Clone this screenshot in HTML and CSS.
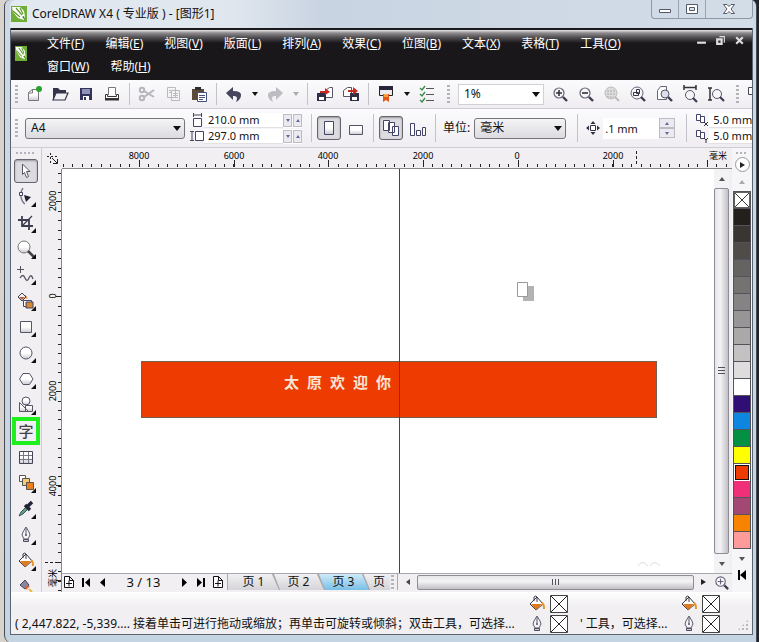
FILE: index.html
```html
<!DOCTYPE html>
<html lang="zh-CN">
<head>
<meta charset="utf-8">
<meta name="viewport" content="width=device-width, initial-scale=1">
<title>CorelDRAW X4 ( 专业版 ) - [图形1]</title>
<link rel="stylesheet" href="styles.css">
</head>
<body>
<svg class="defs" aria-hidden="true">
  <defs>
    <linearGradient id="shade" x1="0" y1="0" x2="0" y2="1"><stop offset=".5" stop-color="#fff"/><stop offset="1" stop-color="#c9c9d2"/></linearGradient>
  </defs>
  <symbol id="i-logo" viewBox="0 0 16 16" preserveAspectRatio="none"><path fill="#6fae35" d="M0 0h16v16H0z"/><path fill="#fff" d="M1 1h8l4 4 1 6-1 3-3-1-3-1-5-6z"/><path stroke="#5d9a2a" stroke-width="1.200" d="M5 2l6 7M9 2l3 6M2 5l7 6" fill="none"/><path fill="#3f7b1b" d="M11 11l2-1 1 4z"/></symbol>
  <symbol id="i-lens" viewBox="0 0 18 18"><circle cx="8" cy="8" r="5" fill="#f6f6fa" stroke="#66667a" stroke-width="1.200"/><path d="M12 12l4 4" stroke="#3c3c50" stroke-width="2.400"/></symbol>
  <symbol id="i-bucket" viewBox="0 0 18 18"><path d="M2 9l7-7 6 7-7 6z" fill="#fff" stroke="#3a3a48"/><path d="M3 9h11l-6 6z" fill="#e07a1c"/><path d="M6 6V2q2-2 3 0v5" fill="none" stroke="#3a3a48"/><path d="M14 8q2 1 2 6" fill="none" stroke="#e8962c" stroke-width="2"/></symbol>
  <symbol id="i-nib" viewBox="0 0 18 18"><path d="M9 1q-4 6-4 8l2 4h4l2-4q0-2-4-8z" fill="#f4f4f8" stroke="#5b5b6c"/><path d="M9 2v6" stroke="#5b5b6c"/><path d="M6.500 13.500h5v2h-5z" fill="#ccd" stroke="#4b4b5c"/><circle cx="9" cy="9" r="1" fill="#4b4b5c"/></symbol>
  <symbol id="i-addpage" viewBox="0 0 12 14"><path d="M1.500 1.500h5l4 4v7h-9zM6.500 1.500v4h4" fill="#fff" stroke="#111"/><path d="M3 8.500h6M6 5.500v6" stroke="#111"/></symbol>
  <symbol id="i-none" viewBox="0 0 18 18"><path d="M.5.5h17v17H.5z" fill="#fff" stroke="#444"/><path d="M1 1l16 16M17 1L1 17" stroke="#222"/></symbol>
</svg>

<div class="window">
  <header class="title-bar">
    <svg class="app-icon"><use href="#i-logo"/></svg>
    <h1>CorelDRAW X4 ( 专业版 ) - [图形1]</h1>
    <div class="caption">
      <button aria-label="最小化"><svg viewBox="0 0 14 12"><path d="M1.500 6.500h11v3h-11z" fill="#fff" stroke="#55596a"/></svg></button>
      <button aria-label="还原"><svg viewBox="0 0 14 12"><path d="M1.500 1.500h11v9h-11z" fill="#fff" stroke="#55596a"/><path d="M4.500 4.500h5v3h-5z" fill="#dce4ee" stroke="#55596a"/></svg></button>
      <button class="wide" aria-label="关闭"><svg viewBox="0 0 14 12"><path d="M1.500 1.500h3.500l2 2 2-2h3.500l-3.500 4.500 3.500 4.500H9l-2-2-2 2H1.500L5 6z" fill="#fff" stroke="#55596a"/></svg></button>
    </div>
  </header>

  <div class="client">
    <nav class="menu-bar">
      <svg class="doc-icon"><use href="#i-logo"/></svg>
      <div class="menus">
        <button>文件(<u>F</u>)</button><button>编辑(<u>E</u>)</button><button>视图(<u>V</u>)</button><button>版面(<u>L</u>)</button><button>排列(<u>A</u>)</button><button>效果(<u>C</u>)</button><button>位图(<u>B</u>)</button><button>文本(<u>X</u>)</button><button>表格(<u>T</u>)</button><button>工具(<u>O</u>)</button><button>窗口(<u>W</u>)</button><button>帮助(<u>H</u>)</button>
      </div>
      <div class="doc-caption">
        <button aria-label="最小化文档"><svg viewBox="0 0 10 10"><path d="M1 6h8v2H1z" fill="#ddd"/></svg></button>
        <button aria-label="还原文档"><svg viewBox="0 0 10 10"><path d="M2 4h4v4H2z" fill="none" stroke="#ddd" stroke-width="2"/><path d="M4 1.500h4.500V7" fill="none" stroke="#ddd"/></svg></button>
        <button aria-label="关闭文档"><svg viewBox="0 0 10 10"><path d="M2 2l6 6M8 2L2 8" stroke="#ddd" stroke-width="2"/></svg></button>
      </div>
    </nav>

    <div class="toolbar standard" role="toolbar" aria-label="标准">
      <i class="grip"></i>
      <button aria-label="新建"><svg viewBox="0 0 18 18"><path d="M3.500 15.500v-8l4-3h6v11z" fill="url(#shade)" stroke="#777"/><path d="M3.500 8h4V4.500" fill="none" stroke="#777"/><circle cx="14" cy="4" r="3" fill="#27a22b"/></svg></button>
      <button aria-label="打开"><svg viewBox="0 0 18 18"><path d="M2 15V3h5l2 2h6v3" fill="#333349"/><path d="M5 8h12l-3 7H2z" fill="#f0f0f5" stroke="#333349" stroke-width="1.200"/></svg></button>
      <button aria-label="保存"><svg viewBox="0 0 18 18"><path d="M3 3h12v12H3z" fill="#34345a"/><path d="M5 4h8v5H5z" fill="#8f93b8"/><path d="M6 11h6v4H6z" fill="#fff"/><path d="M7 12h2v3H7z" fill="#34345a"/></svg></button>
      <button aria-label="打印"><svg viewBox="0 0 18 18"><path d="M5.500 10V2.500h7V10" fill="#fff" stroke="#777"/><path d="M2.500 9.500h2v2h9v-2h2v5h-13z" fill="#fff" stroke="#333"/><path d="M2 13h14v2.500H2z" fill="#333"/></svg></button>
      <i class="sep"></i>
      <button aria-label="剪切" disabled><svg viewBox="0 0 18 18" fill="none" stroke="#b5b5bb" stroke-width="2"><circle cx="4" cy="5" r="2.200"/><circle cx="4" cy="13" r="2.200"/><path d="M6 6l10 6M6 12l10-7"/></svg></button>
      <button aria-label="复制" disabled><svg viewBox="0 0 18 18" fill="#f4f4f6" stroke="#b9b9bf"><path d="M3.500 2.500h8v10h-8zM7.500 5.500h8v10h-8z"/><path d="M9 8.500h5M9 10.500h5M9 12.500h5M5 5.500h2M5 7.500h2"/></svg></button>
      <button aria-label="粘贴"><svg viewBox="0 0 18 18"><path d="M2 4h12v11H2z" fill="#5a4a3a"/><path d="M5 2h6v3H5z" fill="#2d2d30"/><path d="M7.500 7.500h9v9h-9z" fill="#fff" stroke="#44507a"/><path d="M9 10.500h6M9 12.500h6M9 14.500h4" stroke="#44507a"/></svg></button>
      <i class="sep"></i>
      <button aria-label="撤消"><svg viewBox="0 0 18 18"><path d="M1 8l7-6v4q9 0 8 5-1 4-5 6 3-7-3-6v4z" fill="#45455e"/></svg></button>
      <button class="drop" aria-label="撤消列表"></button>
      <button aria-label="重做" disabled><svg viewBox="0 0 18 18"><path d="M17 8l-7-6v4q-9 0-8 5 1 4 5 6-3-7 3-6v4z" fill="#bcbcc2"/></svg></button>
      <button class="drop off" aria-label="重做列表" disabled></button>
      <i class="sep"></i>
      <button aria-label="导入"><svg viewBox="0 0 18 18"><path d="M9.500 12.500v-7l4-3h3v10z" fill="#fff" stroke="#556"/><path d="M1 8h9v8H1z" fill="#2f3048"/><path d="M3 12h5v3H3z" fill="#fff"/><path d="M4 6h5V3l5 4-5 3V8H4z" fill="#c92a23"/></svg></button>
      <button aria-label="导出"><svg viewBox="0 0 18 18"><path d="M1.500 11.500v-6l4-3h4v9z" fill="#fff" stroke="#556"/><path d="M8 8h9v8H8z" fill="#2f3048"/><path d="M10 12h5v3h-5z" fill="#fff"/><path d="M6 5h5V2l5 4-5 4V7H6z" fill="#c92a23"/></svg></button>
      <i class="sep"></i>
      <button aria-label="应用程序启动器"><svg viewBox="0 0 18 18"><path d="M2.500 1.500h13v9h-13z" fill="#e9e9f0" stroke="#222"/><path d="M2 1h14v4H2z" fill="#262638"/><path d="M6 9h6v8l-3-2-3 2z" fill="#e4571b"/><path d="M7 9h4v3H7z" fill="#f6a13a"/></svg></button>
      <button class="drop" aria-label="启动器列表"></button>
      <button aria-label="选项"><svg viewBox="0 0 18 18" fill="none"><path d="M8 3.500h8M8 9.500h8M8 15.500h8" stroke="#555"/><path d="M2 3l2 2 3-4M2 9l2 2 3-4M2 15l2 2 3-4" stroke="#3d8a4e" stroke-width="1.400"/></svg></button>
      <i class="grip mid"></i>
      <label class="combo zoom"><select aria-label="缩放级别"><option>1%</option></select></label>
      <button aria-label="放大"><svg viewBox="0 0 18 18"><use href="#i-lens"/><path d="M5 8h6M8 5v6" stroke="#333" stroke-width="1.600"/></svg></button>
      <button aria-label="缩小"><svg viewBox="0 0 18 18"><use href="#i-lens"/><path d="M5 8h6" stroke="#333" stroke-width="1.600"/></svg></button>
      <button aria-label="缩放选定范围" disabled><svg viewBox="0 0 18 18"><circle cx="8" cy="8" r="6" fill="#ddd" stroke="#bbb"/><path d="M4 6h9M4 9h9M4 12h7" stroke="#aaa" stroke-dasharray="2 1"/><path d="M12 12l4 4" stroke="#bbb" stroke-width="2"/></svg></button>
      <button aria-label="缩放全部对象"><svg viewBox="0 0 18 18"><circle cx="8" cy="8" r="6" fill="#f6f6fa" stroke="#66667a"/><path d="M12 12l4 4" stroke="#3c3c50" stroke-width="2.400"/><path d="M4.500 7.500h5v3h-5zM7.500 4.500h3v4h-3z" fill="none" stroke="#334"/></svg></button>
      <button aria-label="缩放页面"><svg viewBox="0 0 18 18"><path d="M2.500 14.500v-9l3-4h6v13z" fill="#fff" stroke="#667"/><circle cx="10" cy="9" r="4" fill="#dde" stroke="#55556a"/><path d="M13 12l4 4" stroke="#3c3c50" stroke-width="2.400"/></svg></button>
      <button aria-label="按页宽缩放"><svg viewBox="0 0 18 18"><path d="M3 0v5M15 0v5M3 2.500h12" stroke="#333" stroke-width="1.500"/><circle cx="9" cy="10" r="4.500" fill="#f6f6fa" stroke="#55556a"/><path d="M12 13l4 4" stroke="#3c3c50" stroke-width="2.200"/></svg></button>
      <button aria-label="按页高缩放"><svg viewBox="0 0 18 18"><path d="M1 3h4M1 15h4M3 3v12" stroke="#333" stroke-width="1.500"/><circle cx="10" cy="9" r="4.500" fill="#f6f6fa" stroke="#55556a"/><path d="M13 12l4 4" stroke="#3c3c50" stroke-width="2.200"/></svg></button>
      <i class="grip mid"></i>
      <button class="snap" aria-label="贴齐"><svg viewBox="0 0 18 18"><path d="M1.500 2.500h10v7h-10z" fill="#fff" stroke="#445"/></svg></button>
    </div>

    <div class="toolbar property" role="toolbar" aria-label="属性栏">
      <i class="grip"></i>
      <label class="combo paper"><select aria-label="纸张类型"><option>A4</option></select></label>
      <div class="fields size">
        <label><svg viewBox="0 0 14 14"><path d="M3.500 5.500h8v8h-8z" fill="#fff" stroke="#446"/><path d="M3.500 0v4M11.500 0v4M3 2h9" stroke="#446"/></svg><input aria-label="页面宽度" value="210.0 mm"><span class="arrows"><b class="dn"></b><b class="up"></b></span></label>
        <label><svg viewBox="0 0 14 14"><path d="M5.500 2.500h8v9h-8z" fill="#fff" stroke="#446"/><path d="M0 2.500h4M0 11.500h4M2 2v10" stroke="#446"/></svg><input aria-label="页面高度" value="297.0 mm"><span class="arrows"><b class="dn"></b><b class="up"></b></span></label>
      </div>
      <i class="sep"></i>
      <button class="pressed" aria-label="纵向"><svg viewBox="0 0 18 18"><path d="M4.500 2.500h9v13h-9z" fill="url(#shade)" stroke="#446"/></svg></button>
      <button aria-label="横向"><svg viewBox="0 0 18 18"><path d="M2.500 6.500h13v9h-13z" fill="url(#shade)" stroke="#556"/></svg></button>
      <i class="sep"></i>
      <button class="pressed" aria-label="所有页面"><svg viewBox="0 0 18 18" fill="#fff" stroke="#446"><path d="M1.500 1.500h6v10h-6zM6.500 3.500h6v10h-6zM10.500 7.500h6v9h-6z"/></svg></button>
      <button aria-label="当前页面"><svg viewBox="0 0 18 18" fill="#fff" stroke="#446"><path d="M1.500 4.500h4v12h-4zM7.500 11.500h4v5h-4zM13.500 8.500h3v8h-3z"/></svg></button>
      <i class="sep"></i>
      <label class="unit" for="unit">单位:</label>
      <span class="combo units"><select id="unit"><option>毫米</option></select></span>
      <i class="sep wide"></i>
      <label class="nudge"><svg viewBox="0 0 14 14"><path d="M4.500 4.500h5v5h-5z" fill="#fff" stroke="#334"/><path d="M7 0l2.500 3h-5zM7 14l2.500-3h-5zM0 7l3-2.500v5zM14 7l-3-2.500v5z" fill="#334"/></svg><input aria-label="微调偏移" value=".1 mm"><span class="stack"><b class="up"></b><b class="dn"></b></span></label>
      <i class="sep wide"></i>
      <div class="fields dup">
        <label><svg viewBox="0 0 14 14"><path d="M1.500 1.500h4v6h-4zM5.500 3.500h4v6h-4z" fill="#fff" stroke="#446"/><path d="M9 9l4 4M13 9l-4 4" stroke="#334"/></svg><input aria-label="再制距离 X" value="5.0 mm"></label>
        <label><svg viewBox="0 0 14 14"><path d="M1.500 1.500h4v6h-4zM5.500 3.500h4v6h-4z" fill="#fff" stroke="#446"/><path d="M9 9l2 2 2-2M11 11v3" fill="none" stroke="#334"/></svg><input aria-label="再制距离 Y" value="5.0 mm"></label>
      </div>
    </div>

    <div class="work">
      <aside class="toolbox" aria-label="工具箱">
        <i class="grip-h"></i>
        <button class="pressed" aria-label="挑选"><svg viewBox="0 0 18 18"><path d="M5.500 2l7.500 7.500H9.500l2 5-2 1-2-5-2 2z" fill="#fff" stroke="#556"/></svg></button>
        <button class="fly" aria-label="形状"><svg viewBox="0 0 18 18"><path d="M6 0q-3 4-2 9t4 7" fill="none" stroke="#778" stroke-width="1.300"/><path d="M2.500 4.500h3v3h-3z" fill="#fff" stroke="#446"/><path d="M7 7l7 2-5 5z" fill="#223"/></svg></button>
        <button class="fly" aria-label="裁剪"><svg viewBox="0 0 18 18" fill="none" stroke="#3d3d50" stroke-width="1.800"><path d="M5 2v10h11M1 6h11v10"/><path d="M5 12L15 2" stroke-width="1.300"/></svg></button>
        <button class="fly" aria-label="缩放"><svg viewBox="0 0 18 18"><circle cx="7" cy="7" r="6" fill="url(#shade)" stroke="#777"/><path d="M11 11l6 6" stroke="#444" stroke-width="2.600"/></svg></button>
        <button class="fly" aria-label="手绘"><svg viewBox="0 0 18 18" fill="none" stroke="#556"><path d="M3.500 0v7M0 3.500h7"/><path d="M3 12q3-5 5 0t4 0 4 1" stroke-width="1.300"/></svg></button>
        <button class="fly" aria-label="智能填充"><svg viewBox="0 0 18 18"><path d="M1 5l4-4 4 4-4 4z" fill="#f3f3f6" stroke="#445"/><path d="M2 5h6L5 8z" fill="#c05a3a"/><path d="M8 3q2 1 2 4" fill="none" stroke="#d8892f"/><path d="M6.500 8.500h8v6h-8z" fill="#fff" stroke="#446"/><path d="M9 10h7v6H9z" fill="#d8892f" stroke="#446"/></svg></button>
        <button class="fly" aria-label="矩形"><svg viewBox="0 0 18 18"><path d="M3.500 3.500h11v11h-11z" fill="url(#shade)" stroke="#556"/></svg></button>
        <button class="fly" aria-label="椭圆形"><svg viewBox="0 0 18 18"><circle cx="9" cy="9" r="6" fill="url(#shade)" stroke="#556"/></svg></button>
        <button class="fly" aria-label="多边形"><svg viewBox="0 0 18 18"><path d="M2.500 9l3.500-5.500h6.500L16 9l-3.500 5.500H6z" fill="url(#shade)" stroke="#556"/></svg></button>
        <button class="fly" aria-label="基本形状"><svg viewBox="0 0 18 18" fill="url(#shade)" stroke="#556"><path d="M2.500 6.500v9h9zM8.500 9.500h7v6h-7z"/><circle cx="9" cy="5" r="4"/></svg></button>
        <button class="text-tool" aria-label="文本">字</button>
        <button aria-label="表格"><svg viewBox="0 0 18 18"><path d="M2.500 3.500h13v12h-13z" fill="url(#shade)" stroke="#445"/><path d="M3 7.500h12M3 11.500h12M6.500 4v11M11.500 4v11" stroke="#778"/></svg></button>
        <button class="fly" aria-label="调和"><svg viewBox="0 0 18 18" stroke="#555"><path d="M2.500 1.500h6v6h-6z" fill="#fff"/><path d="M5.500 4.500h7v7h-7z" fill="#f8c873"/><path d="M9.500 8.500h7v7h-7z" fill="#ef7d1a"/></svg></button>
        <button class="fly" aria-label="滴管"><svg viewBox="0 0 18 18"><path d="M2 16l2-4 5-5 2 2-5 5z" fill="#5da07b" stroke="#456"/><path d="M8 5l5 5M10 7l5-5" stroke="#222236" stroke-width="3.400"/></svg></button>
        <button class="fly" aria-label="轮廓"><svg viewBox="0 0 18 18"><use href="#i-nib"/></svg></button>
        <button class="fly" aria-label="填充"><svg viewBox="0 0 18 18"><use href="#i-bucket"/></svg></button>
        <button aria-label="交互式填充"><svg viewBox="0 0 18 18"><path d="M3 7l5-5 4 5-4 4z" fill="#8787a5" stroke="#445"/><path d="M8 8h5l-4 4z" fill="#d3672c"/><path d="M12 11l3 3" stroke="#efb640" stroke-width="2"/></svg></button>
      </aside>

      <main class="document">
        <div class="corner"><svg viewBox="0 0 20 20" stroke="#222" fill="none"><path d="M8.500 5v10M5 8.500h11" stroke-dasharray="2 2"/><path d="M10 10l5 5M15.500 11v4.500H11"/></svg></div>
        <div class="ruler top">
          <svg aria-label="水平标尺">
            <g class="labels"><text x="77" y="11">8000</text><text x="172" y="11">6000</text><text x="266" y="11">4000</text><text x="361" y="11">2000</text><text x="455" y="11">0</text><text x="551" y="11">2000</text><text x="656" y="11">毫米</text></g>
            <path class="tick" stroke-width="3" stroke-dasharray="1 8.470" d="M1 17.500h666"/>
            <path class="tick" stroke-width="7" stroke-dasharray="1 93.700" d="M77 15.500h590"/>
            <path class="tick" stroke-dasharray="3 2" d="M574.500 3v13"/>
          </svg>
        </div>
        <div class="ruler left">
          <svg aria-label="垂直标尺">
            <g class="labels"><text transform="translate(14 32) rotate(-90)">2000</text><text transform="translate(14 127) rotate(-90)">0</text><text transform="translate(14 222) rotate(-90)">2000</text><text transform="translate(14 317) rotate(-90)">4000</text><text transform="translate(14 409) rotate(-90)">毫米</text></g>
            <path class="tick" stroke-width="3" stroke-dasharray="1 8.480" d="M17.500 4v418"/>
            <path class="tick" stroke-width="5" stroke-dasharray="1 93.800" d="M16.500 32v390"/>
            <path class="tick" stroke-dasharray="3 2" d="M3 393.500h16"/>
          </svg>
        </div>
        <section class="canvas" aria-label="绘图窗口">
          <div class="banner"><span>太</span><span>原</span><span>欢</span><span>迎</span><span>你</span></div>
          <i class="guide"></i>
          <svg class="pages" viewBox="0 0 18 20"><path d="M6 4h11v15H6z" fill="#b3b3b3"/><path d="M.5.5h10v14H.5z" fill="#fff" stroke="#999"/></svg>
          <svg class="mark" viewBox="0 0 24 8" fill="none" stroke="#ddd"><path d="M1 6q4-7 10 0M13 6q4-7 10 0"/></svg>
        </section>
        <div class="vscroll"><b class="up"></b><div class="thumb"></div><b class="dn"></b></div>
        <footer class="navigator">
          <div class="page-nav">
            <button aria-label="在前添加页"><svg viewBox="0 0 12 14"><use href="#i-addpage"/></svg></button>
            <button aria-label="第一页"><svg viewBox="0 0 12 14"><path d="M2 3h2v9H2zM10 3v9L5 7.500z"/></svg></button>
            <button aria-label="上一页"><svg viewBox="0 0 12 14"><path d="M8 3v9L3 7.500z"/></svg></button>
            <output>3 / 13</output>
            <button aria-label="下一页"><svg viewBox="0 0 12 14"><path d="M4 3v9l5-4.500z"/></svg></button>
            <button aria-label="最后一页"><svg viewBox="0 0 12 14"><path d="M2 3v9l5-4.500zM8 3h2v9H8z"/></svg></button>
            <button aria-label="在后添加页"><svg viewBox="0 0 12 14"><use href="#i-addpage"/></svg></button>
          </div>
          <div class="tabs"><button>页 1</button><button>页 2</button><button class="active">页 3</button><button class="last">页</button></div>
          <i class="grip"></i>
          <div class="hscroll"><b class="lt"></b><div class="thumb"></div><b class="rt"></b></div>
          <button class="navzoom" aria-label="导航器"><svg viewBox="0 0 18 18"><use href="#i-lens"/><path d="M5 8h6M8 5v6" stroke="#556"/></svg></button>
        </footer>
      </main>

      <aside class="palette" aria-label="调色板">
        <i class="grip-h"></i>
        <button class="round" aria-label="调色板菜单"><b class="rt"></b></button>
        <b class="up pale"></b>
        <div class="swatches">
          <button class="none" aria-label="无"><svg viewBox="0 0 18 18" preserveAspectRatio="none"><use href="#i-none"/></svg></button>
          <button class="k100" aria-label="黑"></button><button class="k90" aria-label="90% 黑"></button><button class="k80" aria-label="80% 黑"></button><button class="k70" aria-label="70% 黑"></button><button class="k60" aria-label="60% 黑"></button><button class="k50" aria-label="50% 黑"></button><button class="k40" aria-label="40% 黑"></button><button class="k30" aria-label="30% 黑"></button><button class="k20" aria-label="20% 黑"></button><button class="k10" aria-label="10% 黑"></button><button class="white" aria-label="白"></button><button class="blue" aria-label="蓝"></button><button class="cyan" aria-label="青"></button><button class="green" aria-label="绿"></button><button class="yellow" aria-label="黄"></button><button class="red" aria-label="红"></button><button class="magenta" aria-label="洋红"></button><button class="purple" aria-label="紫"></button><button class="orange" aria-label="橘红"></button><button class="pink" aria-label="粉"></button>
        </div>
        <b class="dn"></b>
        <button class="expand" aria-label="展开"><svg viewBox="0 0 12 14"><path d="M2 2h2v10H2zM10 2v10L4 7z"/></svg></button>
      </aside>
    </div>

    <div class="status">
      <p class="hint">( 2,447.822, -5,339.... 接着单击可进行拖动或缩放；再单击可旋转或倾斜；双击工具，可选择...</p>
      <div class="info"><svg viewBox="0 0 18 18"><use href="#i-bucket"/></svg><svg viewBox="0 0 18 18"><use href="#i-none"/></svg><svg viewBox="0 0 18 18"><use href="#i-nib"/></svg><svg viewBox="0 0 18 18"><use href="#i-none"/></svg></div>
      <p class="more">' 工具，可选择...</p>
      <div class="info"><svg viewBox="0 0 18 18"><use href="#i-bucket"/></svg><svg viewBox="0 0 18 18"><use href="#i-none"/></svg><svg viewBox="0 0 18 18"><use href="#i-nib"/></svg><svg viewBox="0 0 18 18"><use href="#i-none"/></svg></div>
      <i class="resize"></i>
    </div>
  </div>
</div>
</body>
</html>
```
FILE: styles.css
```css
* { box-sizing: border-box; }

body {
  margin: 0;
  padding: 0 2px 0 4px;
  min-height: 100vh;
  display: flex;
  background: linear-gradient(90deg, #d8d3cc 50%, #202328 50%);
  font: 12px/16px "Noto Sans", "Noto Sans CJK SC", sans-serif;
  color: #111;
  overflow: hidden;
}

button, input, select { font: inherit; color: inherit; margin: 0; padding: 0; border: 0; background: none; border-radius: 0; }
button { display: flex; align-items: center; justify-content: center; flex: none; }
svg { display: block; flex: none; }
p, h1 { margin: 0; }
.defs { position: absolute; width: 0; height: 0; }

.window {
  flex: 1;
  min-width: 0;
  display: flex;
  flex-direction: column;
  padding: 0 3px 8px 5px;
  border: solid #454b55;
  border-width: 0 1px 0 1px;
  border-radius: 6px 6px 0 8px;
  background: linear-gradient(180deg, #cfd8e4, #cdd9e6 28px, #c5d4e3);
}

/* title bar */
.title-bar { display: flex; height: 28px; padding-left: 1px; align-items: center; background: linear-gradient(90deg, #e3e9f0, #dfe6ee 30%, #c9d4e2 42%, #d3dde8); border-radius: 6px 0 0 0; }
.app-icon { width: 16px; height: 16px; }
.title-bar h1 { flex: 1; padding-left: 5px; font-size: 12px; font-weight: 400; white-space: nowrap; }
.caption { display: flex; align-self: flex-start; height: 19px; border: 1px solid #8e99a8; border-top: 0; border-radius: 0 0 4px 4px; }
.caption button { width: 27px; border-right: 1px solid #98a3b1; }
.caption .wide { width: 46px; border-right: 0; }
.caption svg { width: 14px; height: 12px; }

.client { flex: 1; min-height: 0; display: flex; flex-direction: column; border: 1px solid #5c6470; border-top: 0; background: #f1eff2; overflow: hidden; }

/* menus */
.menu-bar { display: flex; min-height: 52px; border-top: 2px solid #1a1a1c; background: linear-gradient(180deg, #e8e6e8, #8d8b8d 3px, #565456 7px, #1a171a 13px); color: #fff; }
.doc-icon { width: 12px; height: 15px; margin: 16px 0 0 4px; }
.menus { flex: 1; display: flex; flex-wrap: wrap; column-gap: 21px; align-content: flex-start; padding: 2px 24px 0 20px; }
.menus button { height: 23px; }
.menus u { text-underline-offset: 1px; }
.doc-caption { display: flex; gap: 8px; padding: 5px 7px 0 0; align-items: flex-start; }
.doc-caption svg { width: 11px; height: 11px; }

/* toolbars */
.toolbar { display: flex; align-items: center; white-space: nowrap; border-bottom: 1px solid #cfcdd2; background: linear-gradient(180deg, #fbfafc, #efedf1); overflow: hidden; }
.toolbar > * { flex: none; }
.standard { height: 29px; }
.property { height: 39px; }
.toolbar svg { width: 18px; height: 18px; }
.standard button { width: 26px; height: 26px; }
.standard .drop { width: 15px; }
.standard .snap { width: 18px; }
.drop::before { content: ""; border: 3px solid transparent; border-top: 4px solid #111; border-bottom: 0; }
.drop.off::before { border-top-color: #aaa; }
.grip { width: 3px; height: 18px; margin: 0 3px 0 4px; background: repeating-linear-gradient(180deg, #b5b3ba 0 2px, transparent 2px 4px); }
.grip.mid { margin: 0 8px 0 7px; }
.sep { width: 1px; height: 22px; margin: 0 4px; background: #c4c2c8; }
.property .sep { height: 28px; margin: 0 5px 0 4px; }
.property .sep.wide { margin: 0 8px 0 11px; }

.combo { display: block; position: relative; }
.combo select { appearance: none; width: 100%; height: 21px; padding: 0 5px; border: 1px solid #77757c; border-radius: 3px; background: linear-gradient(180deg, #f4f3f5, #dcdbdf); }
.combo::after { content: ""; position: absolute; right: 4px; top: 8px; border: 4px solid transparent; border-top: 5px solid #111; border-bottom: 0; pointer-events: none; }
.zoom { width: 86px; margin-right: 3px; }
.zoom select { border-color: #d2d0d5; border-radius: 0; background: #fff; }
.paper { width: 160px; margin-left: 4px; }
.units { width: 92px; }
.unit { padding: 0 4px 0 2px; }

.fields { display: flex; flex-direction: column; }
.fields label { display: flex; align-items: center; height: 16px; }
.fields input, .nudge input { background: #fff; height: 15px; min-width: 0; font-size: 11px; }
.toolbar label svg { width: 14px; height: 14px; }
.size { width: 112px; margin: 0 5px; }
.size input { flex: 1; padding-left: 4px; border-bottom: 1px solid #e2e0e5; }
.dup input { width: 60px; padding-left: 4px; border-bottom: 1px solid #e2e0e5; }
.arrows { display: flex; gap: 1px; height: 15px; align-items: center; background: #fff; }
.arrows b, .stack b { display: flex; align-items: center; justify-content: center; width: 9px; height: 13px; background: #ebeaf0; border: 1px solid #bdbbc4; }
.nudge { display: flex; align-items: center; gap: 3px; }
.nudge input { width: 56px; height: 21px; padding-left: 2px; }
.stack { display: flex; flex-direction: column; margin-left: -3px; }
.stack b { width: 16px; height: 10px; }

.up::before, .dn::before, .lt::before, .rt::before { content: ""; display: block; border: 3px solid transparent; }
.up::before { border-bottom: 4px solid #555; border-top: 0; }
.dn::before { border-top: 4px solid #555; border-bottom: 0; }
.lt::before { border-right: 4px solid #444; border-left: 0; }
.rt::before { border-left: 5px solid #222; border-right: 0; }
.arrows b::before, .stack b::before { border-width: 2px; }
.arrows .up::before, .stack .up::before { border-bottom: 3px solid #656a9c; border-top: 0; }
.arrows .dn::before, .stack .dn::before { border-top: 3px solid #656a9c; border-bottom: 0; }
.up.pale::before { border-bottom-color: #aaa; }

.property > button { width: 24px; height: 24px; margin: 0 1px 0 0; }
.property > .pressed { margin: 0 3px 0 0; }
.pressed { border: 1px solid #66646c; border-radius: 3px; background: #dcdbe0; box-shadow: inset 0 1px 2px #99979f; }

/* work area */
.work { flex: 1; min-height: 0; display: grid; grid-template-columns: 31px 1fr 20px; height: 444px; }
.toolbox { display: flex; flex-direction: column; align-items: center; height: 444px; border-right: 1px solid #cfcdd2; overflow: hidden; }
.toolbox button { position: relative; width: 28px; height: 26px; }
.toolbox .pressed { width: 24px; height: 24px; margin: 1px 0; }
.toolbox svg { width: 18px; height: 18px; }
.fly::after { content: ""; position: absolute; right: 4px; bottom: 3px; width: 5px; height: 5px; background: #111; clip-path: polygon(100% 0, 100% 100%, 0 100%); }
.toolbox .text-tool { height: 28px; margin: -1px 0; border: 4px solid #1df01d; font: 500 15px/18px "Noto Sans CJK SC", sans-serif; color: #444; }
.grip-h { flex: none; width: 20px; height: 2px; margin: 4px 0; background: repeating-linear-gradient(90deg, #b5b3ba 0 2px, transparent 2px 4px); }

.document { display: grid; grid-template: 21px 1fr 19px / 20px 1fr 18px; min-width: 0; min-height: 0; height: 444px; }
.corner svg { width: 20px; height: 20px; }
.ruler { overflow: hidden; }
.ruler.top { grid-column: 2 / 4; border-bottom: 1px solid #888; }
.ruler.left { grid-row: 2 / 4; grid-column: 1; border-right: 1px solid #888; }
.ruler svg { width: 100%; height: 100%; }
.labels { font-size: 9px; text-anchor: middle; }
.tick { stroke: #222; fill: none; shape-rendering: crispEdges; }

.canvas { position: relative; overflow: hidden; background: #fff; }
.banner { position: absolute; left: 79px; top: 192px; width: 516px; height: 57px; padding: 10px 0 0 142px; display: flex; gap: 8px; background: #ed3b02; border: 1px solid #74604e; font: 700 15px/20px "Noto Sans CJK SC", sans-serif; color: #fbe4d4; }
.guide { position: absolute; left: 337px; top: 0; width: 1px; height: 100%; background: #4038a8; }
.pages { position: absolute; left: 455px; top: 113px; width: 18px; height: 20px; }
.mark { position: absolute; right: 53px; bottom: 5px; width: 24px; height: 8px; }

.vscroll { display: flex; flex-direction: column; background: #f3f2f4; margin-right: 3px; }
.vscroll > b { display: flex; height: 19px; align-items: center; justify-content: center; }
.vscroll .thumb, .hscroll .thumb { flex: 1; display: flex; align-items: center; justify-content: center; border: 1px solid #8f8d94; border-radius: 2px; background: linear-gradient(90deg, #e6e5e9, #f4f3f5 40%, #c2c0c6); }
.vscroll .thumb::before { content: ""; width: 7px; height: 8px; background: repeating-linear-gradient(180deg, #55535a 0 1px, transparent 1px 3px); }

.navigator { grid-column: 2 / 4; display: flex; align-items: center; border-top: 1px solid #aaa8ae; background: #f1eff2; overflow: hidden; padding: 0 2px 2px 0; }
.page-nav { display: flex; align-items: center; width: 165px; padding: 0 3px 0 1px; justify-content: space-between; }
.page-nav button { width: 12px; }
.page-nav svg { width: 12px; height: 14px; }
.page-nav output { font-size: 13px; padding: 0 12px; white-space: nowrap; }
.tabs { display: flex; width: 163px; height: 16px; overflow: hidden; border-left: 1px solid #aaa8ae; background: #aaa8ae; }
.tabs button { width: 51px; margin-right: -6px; height: 16px; font-size: 12px; background: linear-gradient(180deg, #f1f0f2, #d4d3d7); clip-path: polygon(0 0, 86% 0, 100% 100%, 0 100%); }
.tabs button + button { clip-path: polygon(2% 0, 86% 0, 100% 100%, 14% 100%); }
.tabs .active { background: linear-gradient(180deg, #cfeaf9, #79bfe6); }
.tabs .last { width: 28px; margin-right: 0; padding-left: 4px; }
.tabs button + .last { clip-path: polygon(2% 0, 100% 0, 100% 100%, 26% 100%); }
.navigator .grip { height: 14px; margin: 0 3px 0 1px; flex: none; }
.hscroll { flex: 1; display: flex; height: 16px; align-items: center; border-left: 1px solid #aaa8ae; }
.hscroll > b { display: flex; width: 19px; justify-content: center; }
.hscroll .thumb { height: 15px; background: linear-gradient(180deg, #e6e5e9, #f4f3f5 40%, #c2c0c6); }
.hscroll .thumb::before { content: ""; width: 8px; height: 6px; background: repeating-linear-gradient(90deg, #55535a 0 1px, transparent 1px 3px); }
.navzoom svg { width: 17px; height: 17px; }

/* colour palette */
.palette { display: flex; flex-direction: column; align-items: center; height: 444px; background: #f6f5f7; }
.palette .grip-h { width: 12px; margin-bottom: 3px; }
.round { width: 15px; height: 15px; border: 1px solid #99979f; border-radius: 50%; background: #fff; }
.palette > b { display: flex; align-items: center; justify-content: center; height: 19px; }
.swatches { border: solid #55535a; border-width: 1px 1px 0; background: #fff; }
.swatches button { width: 16px; height: 17px; border-bottom: 1px solid #55535a; }
.swatches svg { width: 16px; height: 16px; }
.k100 { background: #231f1c; } .k90 { background: #393532; } .k80 { background: #4f4b48; } .k70 { background: #656361; }
.k60 { background: #757372; } .k50 { background: #858383; } .k40 { background: #979596; } .k30 { background: #aaa8a8; }
.k20 { background: #c3c1c1; } .k10 { background: #dfdcdd; } .white { background: #fff; } .blue { background: #2f0f75; }
.cyan { background: #0e86e0; } .green { background: #039043; } .yellow { background: #ffff00; }
.swatches .red { height: 15px; width: 14px; margin: 1px; background: #ed3b02; border: 1px solid #111; }
.magenta { background: #ef3078; } .purple { background: #a34775; } .orange { background: #f88300; } .pink { background: #fd9b9b; }
.expand svg { width: 12px; height: 14px; }

/* status bar */
.status { display: flex; align-items: flex-end; height: 42px; padding: 0 0 1px 4px; border-top: 1px solid #fff; background: linear-gradient(180deg, #fdfdfd, #f1eff2 14px); white-space: nowrap; }
.status p { line-height: 18px; overflow: hidden; }
.hint { flex: 1; min-width: 0; }
.info { display: grid; grid-template-columns: 18px 18px; gap: 2px 4px; }
.info svg { width: 18px; height: 18px; }
.more { width: 112px; padding-left: 12px; }
.resize { width: 12px; height: 12px; margin: 0 3px 2px 17px; background: radial-gradient(circle at 2px 2px, #b9b7be 1px, transparent 1px) 0 0 / 4px 4px; clip-path: polygon(100% 0, 100% 100%, 0 100%); }
```
